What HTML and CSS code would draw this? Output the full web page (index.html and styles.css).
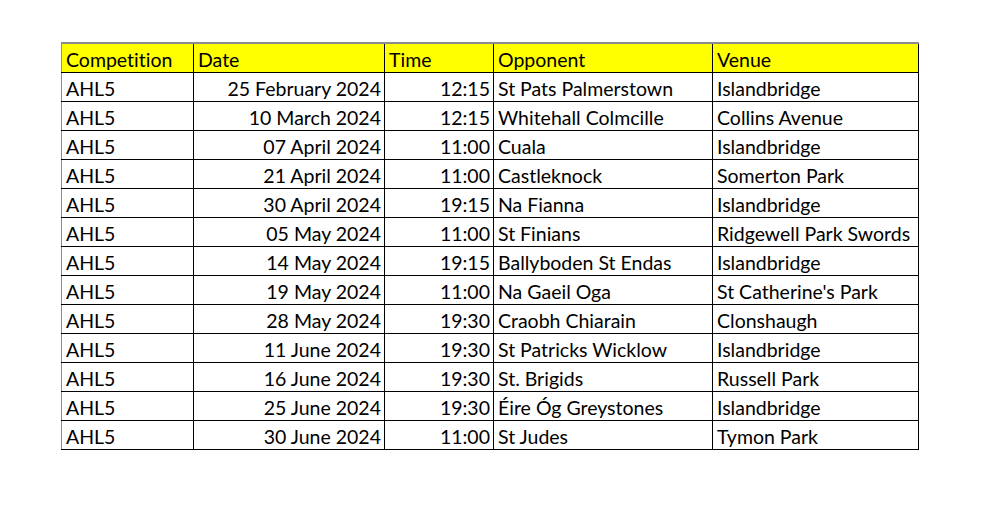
FILE: index.html
```html
<!DOCTYPE html>
<html>
<head>
<meta charset="utf-8">
<link rel="stylesheet" href="styles.css">
</head>
<body>
<table class="fixtures">
<colgroup>
<col class="c-comp"><col class="c-date"><col class="c-time"><col class="c-opp"><col class="c-venue">
</colgroup>
<thead>
<tr><th>Competition</th><th>Date</th><th>Time</th><th>Opponent</th><th>Venue</th></tr>
</thead>
<tbody>
<tr><td>AHL5</td><td class="num">25 February 2024</td><td class="num">12:15</td><td>St Pats Palmerstown</td><td>Islandbridge</td></tr>
<tr><td>AHL5</td><td class="num">10 March 2024</td><td class="num">12:15</td><td>Whitehall Colmcille</td><td>Collins Avenue</td></tr>
<tr><td>AHL5</td><td class="num">07 April 2024</td><td class="num">11:00</td><td>Cuala</td><td>Islandbridge</td></tr>
<tr><td>AHL5</td><td class="num">21 April 2024</td><td class="num">11:00</td><td>Castleknock</td><td>Somerton Park</td></tr>
<tr><td>AHL5</td><td class="num">30 April 2024</td><td class="num">19:15</td><td>Na Fianna</td><td>Islandbridge</td></tr>
<tr><td>AHL5</td><td class="num">05 May 2024</td><td class="num">11:00</td><td>St Finians</td><td>Ridgewell Park Swords</td></tr>
<tr><td>AHL5</td><td class="num">14 May 2024</td><td class="num">19:15</td><td>Ballyboden St Endas</td><td>Islandbridge</td></tr>
<tr><td>AHL5</td><td class="num">19 May 2024</td><td class="num">11:00</td><td>Na Gaeil Oga</td><td>St Catherine's Park</td></tr>
<tr><td>AHL5</td><td class="num">28 May 2024</td><td class="num">19:30</td><td>Craobh Chiarain</td><td>Clonshaugh</td></tr>
<tr><td>AHL5</td><td class="num">11 June 2024</td><td class="num">19:30</td><td>St Patricks Wicklow</td><td>Islandbridge</td></tr>
<tr><td>AHL5</td><td class="num">16 June 2024</td><td class="num">19:30</td><td>St. Brigids</td><td>Russell Park</td></tr>
<tr><td>AHL5</td><td class="num">25 June 2024</td><td class="num">19:30</td><td>Éire Óg Greystones</td><td>Islandbridge</td></tr>
<tr><td>AHL5</td><td class="num">30 June 2024</td><td class="num">11:00</td><td>St Judes</td><td>Tymon Park</td></tr>
</tbody>
</table>
</body>
</html>
```
FILE: styles.css
```css
html, body {
  margin: 0;
  padding: 0;
  background: #ffffff;
}
body {
  padding: 42px 0 0 61px;
  font-family: Lato, "Open Sans", sans-serif;
  font-size: 19.5px;
  font-variant-ligatures: none;
  color: #000;
}
.fixtures {
  border-collapse: collapse;
  table-layout: fixed;
  width: 857px;
}
.c-comp { width: 132px; }
.c-date { width: 191px; }
.c-time { width: 109px; }
.c-opp { width: 219px; }
.c-venue { width: 206px; }
.fixtures th,
.fixtures td {
  height: 29px;
  box-sizing: border-box;
  padding: 3px 3px 0 4px;
  border: 1px solid #000;
  font-weight: normal;
  text-align: left;
  white-space: nowrap;
  overflow: hidden;
  line-height: 25px;
}
.fixtures th {
  background: #ffff00;
  border-top: 2px solid #8c8c8c;
}
.fixtures tr > :first-child {
  border-left: 1px solid #8c8c8c;
}
.fixtures td.num {
  text-align: right;
}
```
